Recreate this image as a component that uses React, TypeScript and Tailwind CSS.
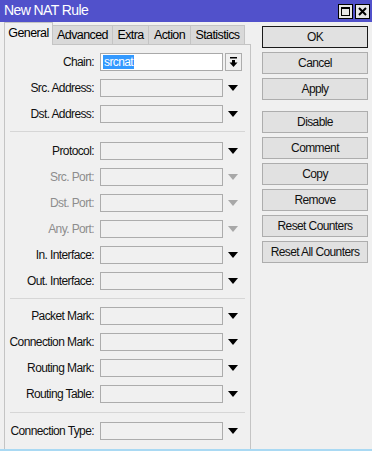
import { FC } from 'react';

const font = { fontFamily: '"Liberation Sans", Arial, sans-serif' };

interface RowProps {
  label: string;
  disabled?: boolean;
  chain?: boolean;
}

const Arrow: FC<{ disabled?: boolean }> = ({ disabled }) => (
  <svg width="10" height="6" viewBox="0 0 10 6" className="ml-[5px]">
    <polygon points="0,0 10,0 5,6" fill={disabled ? '#a8a8a8' : '#000'} />
  </svg>
);

const Row: FC<RowProps> = ({ label, disabled, chain }) => (
  <div className="flex h-[26px] items-center">
    <div
      className={`flex w-[89px] justify-end whitespace-nowrap text-[12px] leading-none ${disabled ? 'text-[#8d8d8d]' : 'text-[#111]'}`}
    >
      {label}
    </div>
    {chain ? (
      <>
        <div className="ml-[6px] flex h-[18px] w-[123px] items-center border border-[#a9a9a9] bg-white pl-[2px]">
          <span className="bg-[#3399ff] px-[1px] text-[12px] leading-[14px] text-white">srcnat</span>
        </div>
        <div className="ml-[2px] flex h-[18px] w-[17px] items-center justify-center border border-[#adadad] bg-[#f0f0f0]">
          <svg width="9" height="10" viewBox="0 0 9 10">
            <rect x="1" y="0" width="7" height="1.5" fill="#000" />
            <rect x="3" y="3" width="3" height="3" fill="#000" />
            <polygon points="0.5,5.5 8.5,5.5 4.5,10" fill="#000" />
          </svg>
        </div>
      </>
    ) : (
      <>
        <div className="ml-[6px] h-[18px] w-[123px] border border-[#acacac] bg-[#f0f0f0]" />
        <Arrow disabled={disabled} />
      </>
    )}
  </div>
);

const Sep: FC<{ cls: string }> = ({ cls }) => (
  <div className={`mx-[5px] border-t border-[#d6d6d6] ${cls}`} />
);

const Btn: FC<{ label: string; primary?: boolean; cls?: string }> = ({ label, primary, cls }) => (
  <div
    className={`flex h-[22px] w-[106px] items-center justify-center bg-[#e1e1e1] text-[12px] text-[#111] ${
      primary ? 'border border-[#1a1a1a]' : 'border border-[#adadad]'
    } ${cls ?? ''}`}
  >
    {label}
  </div>
);

const tabs = ['Advanced', 'Extra', 'Action', 'Statistics'];
const tabW: Record<string, string> = {
  Advanced: 'w-[60px]',
  Extra: 'w-[36px]',
  Action: 'w-[42px]',
  Statistics: 'w-[54px]',
};

export default function App() {
  return (
    <div
      className="h-[451px] w-[372px] overflow-hidden bg-[#a9d9f3] tracking-[-0.6px]"
      style={font}
    >
      <div className="flex h-[449px] flex-col bg-[#f0f0f0]">
        {/* title bar */}
        <div className="flex h-[22px] items-center bg-[#5151cb] pl-[4px] pr-[2px]">
          <span className="flex-1 pb-[1px] text-[14px] tracking-[-0.6px] text-white">New NAT Rule</span>
          <div className="flex gap-[2px]">
            <div className="flex h-[15px] w-[15px] items-center justify-center border border-black bg-[#e6e6e6]">
              <div className="h-[9px] w-[9px] border border-t-2 border-black" />
            </div>
            <div className="flex h-[15px] w-[15px] items-center justify-center border border-black bg-[#e6e6e6]">
              <svg width="9" height="9" viewBox="0 0 9 9">
                <path d="M1 1 L8 8 M8 1 L1 8" stroke="#000" strokeWidth="2" />
              </svg>
            </div>
          </div>
        </div>

        <div className="flex flex-1">
          {/* tabs + panel */}
          <div className="flex w-[251px] flex-col pl-[4px]">
            <div className="relative z-10 flex h-[22px] items-end">
              <div className="mb-[-1px] flex h-[23px] w-[49px] items-center justify-center border border-b-0 border-[#c4c4c4] bg-[#f0f0f0] pb-[2px] text-[12.5px]">
                General
              </div>
              {tabs.map((t) => (
                <div
                  key={t}
                  className={`flex h-[19px] ${tabW[t]} items-center justify-center border border-l-0 border-b-0 border-[#c4c4c4] bg-[#d9d9d9] text-[12.5px]`}
                >
                  {t}
                </div>
              ))}
            </div>
            <div className="flex-1 border border-b-0 border-[#c4c4c4] pt-[4px]">
              <Row label="Chain:" chain />
              <Row label="Src. Address:" />
              <Row label="Dst. Address:" />
              <Sep cls="mt-[4px] mb-[6px]" />
              <Row label="Protocol:" />
              <Row label="Src. Port:" disabled />
              <Row label="Dst. Port:" disabled />
              <Row label="Any. Port:" disabled />
              <Row label="In. Interface:" />
              <Row label="Out. Interface:" />
              <Sep cls="mt-[4px] mb-[4px]" />
              <Row label="Packet Mark:" />
              <Row label="Connection Mark:" />
              <Row label="Routing Mark:" />
              <Row label="Routing Table:" />
              <Sep cls="mt-[5px] mb-[5px]" />
              <Row label="Connection Type:" />
            </div>
          </div>

          {/* buttons */}
          <div className="ml-[11px] flex flex-col gap-[4px] pt-[4px]">
            <Btn label="OK" primary />
            <Btn label="Cancel" />
            <Btn label="Apply" />
            <Btn label="Disable" cls="mt-[7px]" />
            <Btn label="Comment" />
            <Btn label="Copy" />
            <Btn label="Remove" />
            <Btn label="Reset Counters" />
            <Btn label="Reset All Counters" />
          </div>
        </div>
      </div>
    </div>
  );
}
